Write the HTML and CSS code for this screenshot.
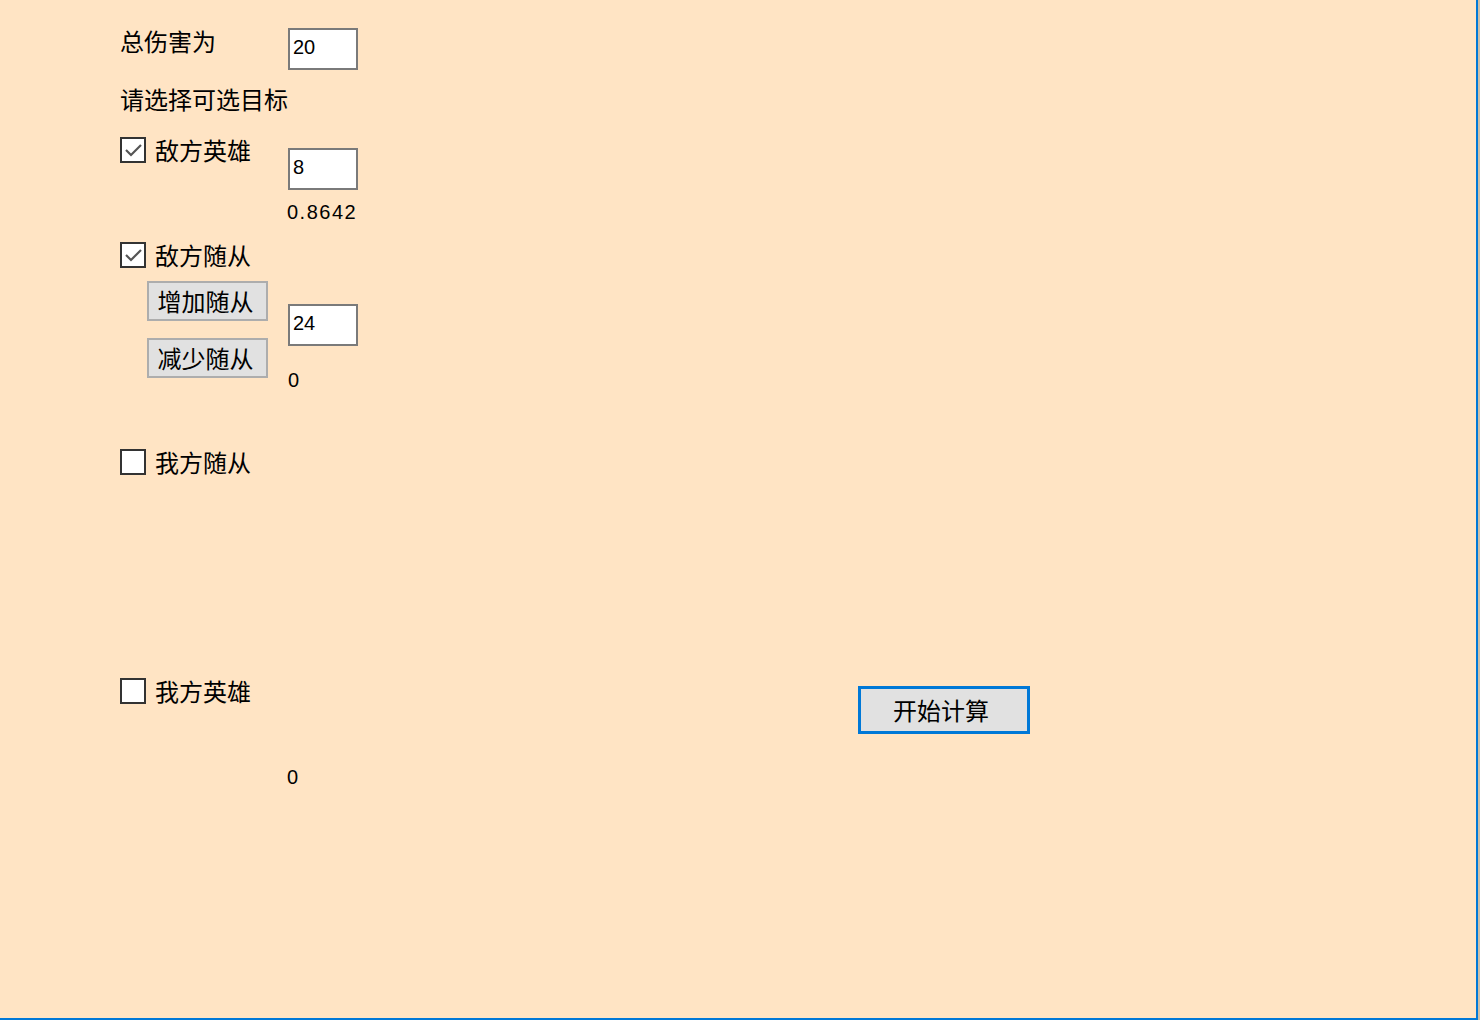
FILE: index.html
```html
<!DOCTYPE html>
<html lang="zh-CN">
<head>
<meta charset="utf-8">
<title>伤害计算</title>
<link rel="stylesheet" href="styles.css">
</head>
<body>
<div class="window">
  <div class="form">
    <div class="row row-total">
      <div class="col-label"><span class="label">总伤害为</span></div>
      <div class="field">20</div>
    </div>

    <div class="label prompt">请选择可选目标</div>

    <div class="row row-hero">
      <div class="col-label">
        <span class="check checked"><svg viewBox="0 0 21 21" width="21" height="21"><path d="M3 10 L8 15 L18 5" fill="none" stroke="#555" stroke-width="2.2"/></svg></span>
        <span class="label">敌方英雄</span>
      </div>
      <div class="field field-low">8</div>
    </div>

    <div class="value value-hero">0.8642</div>

    <div class="row row-minion">
      <div class="col-label">
        <span class="check checked"><svg viewBox="0 0 21 21" width="21" height="21"><path d="M3 10 L8 15 L18 5" fill="none" stroke="#555" stroke-width="2.2"/></svg></span>
        <span class="label">敌方随从</span>
      </div>
    </div>

    <div class="row row-buttons">
      <div class="col-label col-buttons">
        <button class="btn">增加随从</button>
        <button class="btn">减少随从</button>
      </div>
      <div class="col-right">
        <div class="field">24</div>
        <div class="value value-zero">0</div>
      </div>
    </div>

    <div class="row row-own-minion">
      <div class="col-label">
        <span class="check"></span>
        <span class="label">我方随从</span>
      </div>
    </div>

    <div class="row row-own-hero">
      <div class="col-label">
        <span class="check"></span>
        <span class="label">我方英雄</span>
      </div>
      <div class="spacer"></div>
      <button class="btn btn-primary">开始计算</button>
    </div>

    <div class="value value-last">0</div>
  </div>
</div>
</body>
</html>
```

FILE: styles.css
```css
html, body {
  margin: 0;
  padding: 0;
}

body {
  background: #cdbfa8;
  width: 1480px;
  height: 1020px;
  overflow: hidden;
  font-family: "Noto Sans CJK SC", "Liberation Sans", sans-serif;
  color: #000;
}

.window {
  width: 1478px;
  height: 1020px;
  box-sizing: border-box;
  background: #ffe4c4;
  border-right: 2px solid #0078d7;
  border-bottom: 2px solid #0078d7;
}

.form {
  padding-top: 28px;
  padding-left: 120px;
}

.row {
  display: flex;
  align-items: flex-start;
}

.col-label {
  width: 168px;
  flex: none;
  display: flex;
  align-items: center;
}

.label {
  font-size: 24px;
  line-height: 26px;
  white-space: nowrap;
}

.prompt {
  margin-top: 16px;
}

.check {
  width: 26px;
  height: 26px;
  box-sizing: border-box;
  border: 2px solid #333;
  background: #fff;
  flex: none;
  margin-right: 9px;
  display: flex;
  align-items: center;
  justify-content: center;
}

.check svg {
  display: block;
}

.field {
  width: 70px;
  height: 42px;
  box-sizing: border-box;
  border: 2px solid #7a7a7a;
  background: #fff;
  padding: 6px 0 0 3px;
  font-family: "Liberation Sans", Arial, sans-serif;
  font-size: 20px;
  line-height: 22px;
}

.row-hero {
  margin-top: 27px;
}

.row-hero .col-label {
  margin-top: -2px;
}

.field-low {
  margin-top: 9px;
}

.value {
  font-family: "Liberation Sans", Arial, sans-serif;
  font-size: 20px;
  line-height: 22px;
  letter-spacing: 1.5px;
}

.value-hero {
  margin-top: 11px;
  margin-left: 167px;
}

.row-minion {
  margin-top: 19px;
}

.row-buttons {
  margin-top: 13px;
}

.col-buttons {
  flex-direction: column;
  align-items: flex-start;
  padding-left: 27px;
  box-sizing: border-box;
  gap: 17px;
}

.btn {
  width: 121px;
  height: 40px;
  box-sizing: border-box;
  border: 2px solid #adadad;
  background: #e1e1e1;
  font-family: "Noto Sans CJK SC", sans-serif;
  font-size: 24px;
  line-height: 26px;
  padding: 0 4px 0 0;
  color: #000;
}

.col-right {
  margin-top: 23px;
  display: flex;
  flex-direction: column;
}

.value-zero {
  margin-top: 23px;
  margin-left: 0;
}

.row-own-minion {
  margin-top: 58px;
}

.row-own-hero {
  margin-top: 203px;
}

.spacer {
  width: 570px;
  flex: none;
}

.btn-primary {
  width: 172px;
  height: 48px;
  margin-top: 8px;
  border: 3px solid #0078d7;
  padding: 0 6px 0 0;
}

.value-last {
  margin-top: 32px;
  margin-left: 167px;
}
```
